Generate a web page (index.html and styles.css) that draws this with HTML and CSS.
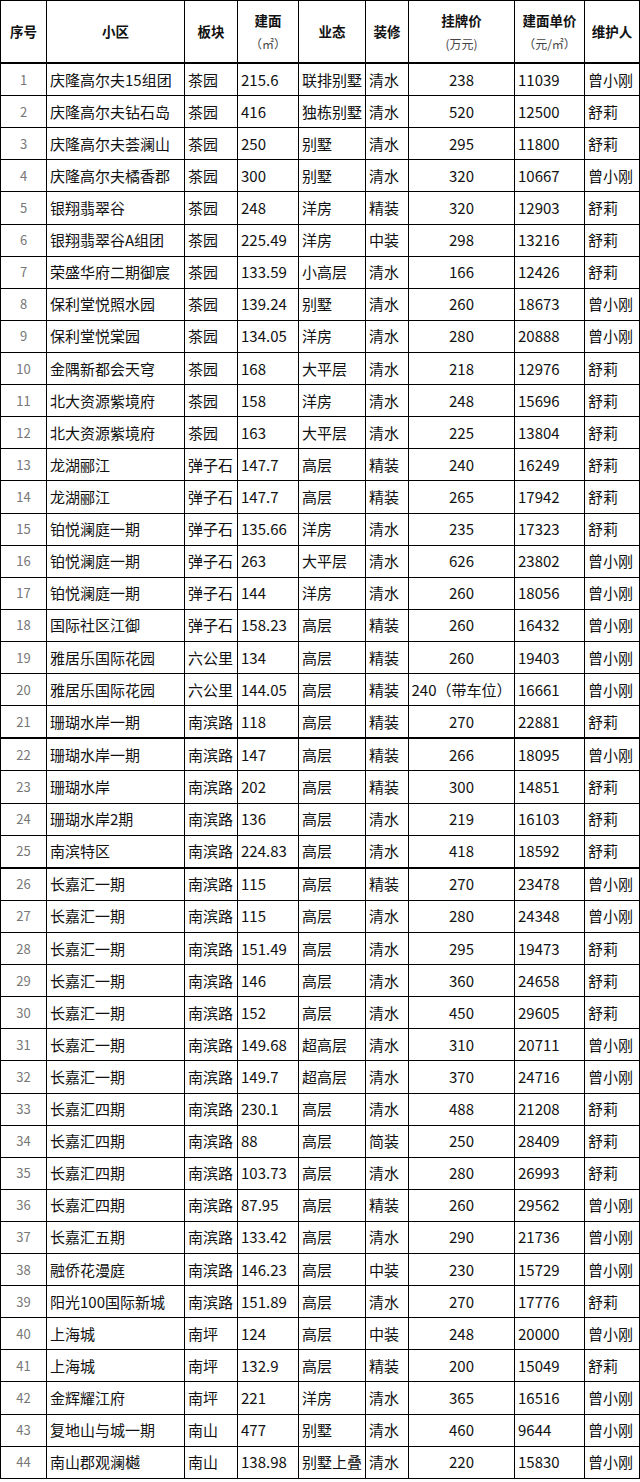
FILE: index.html
```html
<!DOCTYPE html>
<html lang="zh-CN">
<head>
<meta charset="utf-8">
<title>房源表</title>
<link rel="stylesheet" href="styles.css">
</head>
<body>
<table class="listing">
<colgroup>
<col class="c-no"><col class="c-name"><col class="c-area"><col class="c-size"><col class="c-type"><col class="c-deco"><col class="c-price"><col class="c-unit"><col class="c-agent">
</colgroup>
<thead>
<tr>
<th>序号</th><th>小区</th><th>板块</th><th>建面<span class="sub">（㎡）</span></th><th>业态</th><th>装修</th><th>挂牌价<span class="sub">(万元)</span></th><th>建面单价<span class="sub">（元/㎡）</span></th><th>维护人</th>
</tr>
</thead>
<tbody>
<tr><td class="no">1</td><td>庆隆高尔夫15组团</td><td>茶园</td><td>215.6</td><td>联排别墅</td><td>清水</td><td class="price">238</td><td>11039</td><td>曾小刚</td></tr>
<tr><td class="no">2</td><td>庆隆高尔夫钻石岛</td><td>茶园</td><td>416</td><td>独栋别墅</td><td>清水</td><td class="price">520</td><td>12500</td><td>舒莉</td></tr>
<tr><td class="no">3</td><td>庆隆高尔夫荟澜山</td><td>茶园</td><td>250</td><td>别墅</td><td>清水</td><td class="price">295</td><td>11800</td><td>舒莉</td></tr>
<tr><td class="no">4</td><td>庆隆高尔夫橘香郡</td><td>茶园</td><td>300</td><td>别墅</td><td>清水</td><td class="price">320</td><td>10667</td><td>曾小刚</td></tr>
<tr><td class="no">5</td><td>银翔翡翠谷</td><td>茶园</td><td>248</td><td>洋房</td><td>精装</td><td class="price">320</td><td>12903</td><td>舒莉</td></tr>
<tr><td class="no">6</td><td>银翔翡翠谷A组团</td><td>茶园</td><td>225.49</td><td>洋房</td><td>中装</td><td class="price">298</td><td>13216</td><td>舒莉</td></tr>
<tr><td class="no">7</td><td>荣盛华府二期御宸</td><td>茶园</td><td>133.59</td><td>小高层</td><td>清水</td><td class="price">166</td><td>12426</td><td>舒莉</td></tr>
<tr><td class="no">8</td><td>保利堂悦照水园</td><td>茶园</td><td>139.24</td><td>别墅</td><td>清水</td><td class="price">260</td><td>18673</td><td>曾小刚</td></tr>
<tr><td class="no">9</td><td>保利堂悦棠园</td><td>茶园</td><td>134.05</td><td>洋房</td><td>清水</td><td class="price">280</td><td>20888</td><td>曾小刚</td></tr>
<tr><td class="no">10</td><td>金隅新都会天穹</td><td>茶园</td><td>168</td><td>大平层</td><td>清水</td><td class="price">218</td><td>12976</td><td>舒莉</td></tr>
<tr><td class="no">11</td><td>北大资源紫境府</td><td>茶园</td><td>158</td><td>洋房</td><td>清水</td><td class="price">248</td><td>15696</td><td>舒莉</td></tr>
<tr><td class="no">12</td><td>北大资源紫境府</td><td>茶园</td><td>163</td><td>大平层</td><td>清水</td><td class="price">225</td><td>13804</td><td>舒莉</td></tr>
<tr><td class="no">13</td><td>龙湖郦江</td><td>弹子石</td><td>147.7</td><td>高层</td><td>精装</td><td class="price">240</td><td>16249</td><td>舒莉</td></tr>
<tr><td class="no">14</td><td>龙湖郦江</td><td>弹子石</td><td>147.7</td><td>高层</td><td>精装</td><td class="price">265</td><td>17942</td><td>舒莉</td></tr>
<tr><td class="no">15</td><td>铂悦澜庭一期</td><td>弹子石</td><td>135.66</td><td>洋房</td><td>清水</td><td class="price">235</td><td>17323</td><td>舒莉</td></tr>
<tr><td class="no">16</td><td>铂悦澜庭一期</td><td>弹子石</td><td>263</td><td>大平层</td><td>清水</td><td class="price">626</td><td>23802</td><td>曾小刚</td></tr>
<tr><td class="no">17</td><td>铂悦澜庭一期</td><td>弹子石</td><td>144</td><td>洋房</td><td>清水</td><td class="price">260</td><td>18056</td><td>曾小刚</td></tr>
<tr><td class="no">18</td><td>国际社区江御</td><td>弹子石</td><td>158.23</td><td>高层</td><td>精装</td><td class="price">260</td><td>16432</td><td>曾小刚</td></tr>
<tr><td class="no">19</td><td>雅居乐国际花园</td><td>六公里</td><td>134</td><td>高层</td><td>精装</td><td class="price">260</td><td>19403</td><td>曾小刚</td></tr>
<tr><td class="no">20</td><td>雅居乐国际花园</td><td>六公里</td><td>144.05</td><td>高层</td><td>精装</td><td class="price">240（带车位）</td><td>16661</td><td>曾小刚</td></tr>
<tr><td class="no">21</td><td>珊瑚水岸一期</td><td>南滨路</td><td>118</td><td>高层</td><td>精装</td><td class="price">270</td><td>22881</td><td>舒莉</td></tr>
<tr class="sep"><td class="no">22</td><td>珊瑚水岸一期</td><td>南滨路</td><td>147</td><td>高层</td><td>精装</td><td class="price">266</td><td>18095</td><td>曾小刚</td></tr>
<tr><td class="no">23</td><td>珊瑚水岸</td><td>南滨路</td><td>202</td><td>高层</td><td>精装</td><td class="price">300</td><td>14851</td><td>舒莉</td></tr>
<tr><td class="no">24</td><td>珊瑚水岸2期</td><td>南滨路</td><td>136</td><td>高层</td><td>清水</td><td class="price">219</td><td>16103</td><td>舒莉</td></tr>
<tr><td class="no">25</td><td>南滨特区</td><td>南滨路</td><td>224.83</td><td>高层</td><td>清水</td><td class="price">418</td><td>18592</td><td>舒莉</td></tr>
<tr class="sep"><td class="no">26</td><td>长嘉汇一期</td><td>南滨路</td><td>115</td><td>高层</td><td>精装</td><td class="price">270</td><td>23478</td><td>曾小刚</td></tr>
<tr><td class="no">27</td><td>长嘉汇一期</td><td>南滨路</td><td>115</td><td>高层</td><td>清水</td><td class="price">280</td><td>24348</td><td>曾小刚</td></tr>
<tr><td class="no">28</td><td>长嘉汇一期</td><td>南滨路</td><td>151.49</td><td>高层</td><td>清水</td><td class="price">295</td><td>19473</td><td>舒莉</td></tr>
<tr><td class="no">29</td><td>长嘉汇一期</td><td>南滨路</td><td>146</td><td>高层</td><td>清水</td><td class="price">360</td><td>24658</td><td>舒莉</td></tr>
<tr><td class="no">30</td><td>长嘉汇一期</td><td>南滨路</td><td>152</td><td>高层</td><td>清水</td><td class="price">450</td><td>29605</td><td>舒莉</td></tr>
<tr><td class="no">31</td><td>长嘉汇一期</td><td>南滨路</td><td>149.68</td><td>超高层</td><td>清水</td><td class="price">310</td><td>20711</td><td>曾小刚</td></tr>
<tr><td class="no">32</td><td>长嘉汇一期</td><td>南滨路</td><td>149.7</td><td>超高层</td><td>清水</td><td class="price">370</td><td>24716</td><td>曾小刚</td></tr>
<tr><td class="no">33</td><td>长嘉汇四期</td><td>南滨路</td><td>230.1</td><td>高层</td><td>清水</td><td class="price">488</td><td>21208</td><td>舒莉</td></tr>
<tr><td class="no">34</td><td>长嘉汇四期</td><td>南滨路</td><td>88</td><td>高层</td><td>简装</td><td class="price">250</td><td>28409</td><td>舒莉</td></tr>
<tr><td class="no">35</td><td>长嘉汇四期</td><td>南滨路</td><td>103.73</td><td>高层</td><td>清水</td><td class="price">280</td><td>26993</td><td>舒莉</td></tr>
<tr><td class="no">36</td><td>长嘉汇四期</td><td>南滨路</td><td>87.95</td><td>高层</td><td>精装</td><td class="price">260</td><td>29562</td><td>曾小刚</td></tr>
<tr><td class="no">37</td><td>长嘉汇五期</td><td>南滨路</td><td>133.42</td><td>高层</td><td>清水</td><td class="price">290</td><td>21736</td><td>曾小刚</td></tr>
<tr><td class="no">38</td><td>融侨花漫庭</td><td>南滨路</td><td>146.23</td><td>高层</td><td>中装</td><td class="price">230</td><td>15729</td><td>曾小刚</td></tr>
<tr><td class="no">39</td><td>阳光100国际新城</td><td>南滨路</td><td>151.89</td><td>高层</td><td>清水</td><td class="price">270</td><td>17776</td><td>舒莉</td></tr>
<tr><td class="no">40</td><td>上海城</td><td>南坪</td><td>124</td><td>高层</td><td>中装</td><td class="price">248</td><td>20000</td><td>曾小刚</td></tr>
<tr><td class="no">41</td><td>上海城</td><td>南坪</td><td>132.9</td><td>高层</td><td>精装</td><td class="price">200</td><td>15049</td><td>舒莉</td></tr>
<tr><td class="no">42</td><td>金辉耀江府</td><td>南坪</td><td>221</td><td>洋房</td><td>清水</td><td class="price">365</td><td>16516</td><td>曾小刚</td></tr>
<tr><td class="no">43</td><td>复地山与城一期</td><td>南山</td><td>477</td><td>别墅</td><td>清水</td><td class="price">460</td><td>9644</td><td>曾小刚</td></tr>
<tr><td class="no">44</td><td>南山郡观澜樾</td><td>南山</td><td>138.98</td><td>别墅上叠</td><td>清水</td><td class="price">220</td><td>15830</td><td>曾小刚</td></tr>
</tbody>
</table>
</body>
</html>
```

FILE: styles.css
```css
html, body {
  margin: 0;
  padding: 0;
  background: #fff;
}

.listing {
  border-collapse: collapse;
  table-layout: fixed;
  width: 639px;
  font-family: "Noto Sans CJK SC", "Noto Sans", sans-serif;
  font-size: 15px;
  color: #111;
}

.c-no { width: 46px; }
.c-name { width: 138px; }
.c-area { width: 53px; }
.c-size { width: 61px; }
.c-type { width: 67px; }
.c-deco { width: 43px; }
.c-price { width: 106px; }
.c-unit { width: 70px; }
.c-agent { width: 55px; }

.listing th,
.listing td {
  border: 1px solid #000;
  padding: 0 0 0 3px;
  white-space: nowrap;
  overflow: hidden;
}

.listing th {
  height: 61px;
  font-size: 13.5px;
  font-weight: bold;
  text-align: center;
  padding: 0;
  line-height: 23px;
  border-bottom: 2px solid #000;
  color: #111;
}

.listing th .sub {
  display: block;
  font-weight: normal;
  font-size: 12px;
  color: #444;
}

.listing td {
  height: 31.12px;
  line-height: 20px;
}

.listing td.no {
  text-align: center;
  color: #777;
  font-size: 13px;
  padding: 0;
}

.listing td.price {
  text-align: center;
  padding: 0;
}

.listing tr.sep td {
  border-top: 2px solid #000;
}
```
